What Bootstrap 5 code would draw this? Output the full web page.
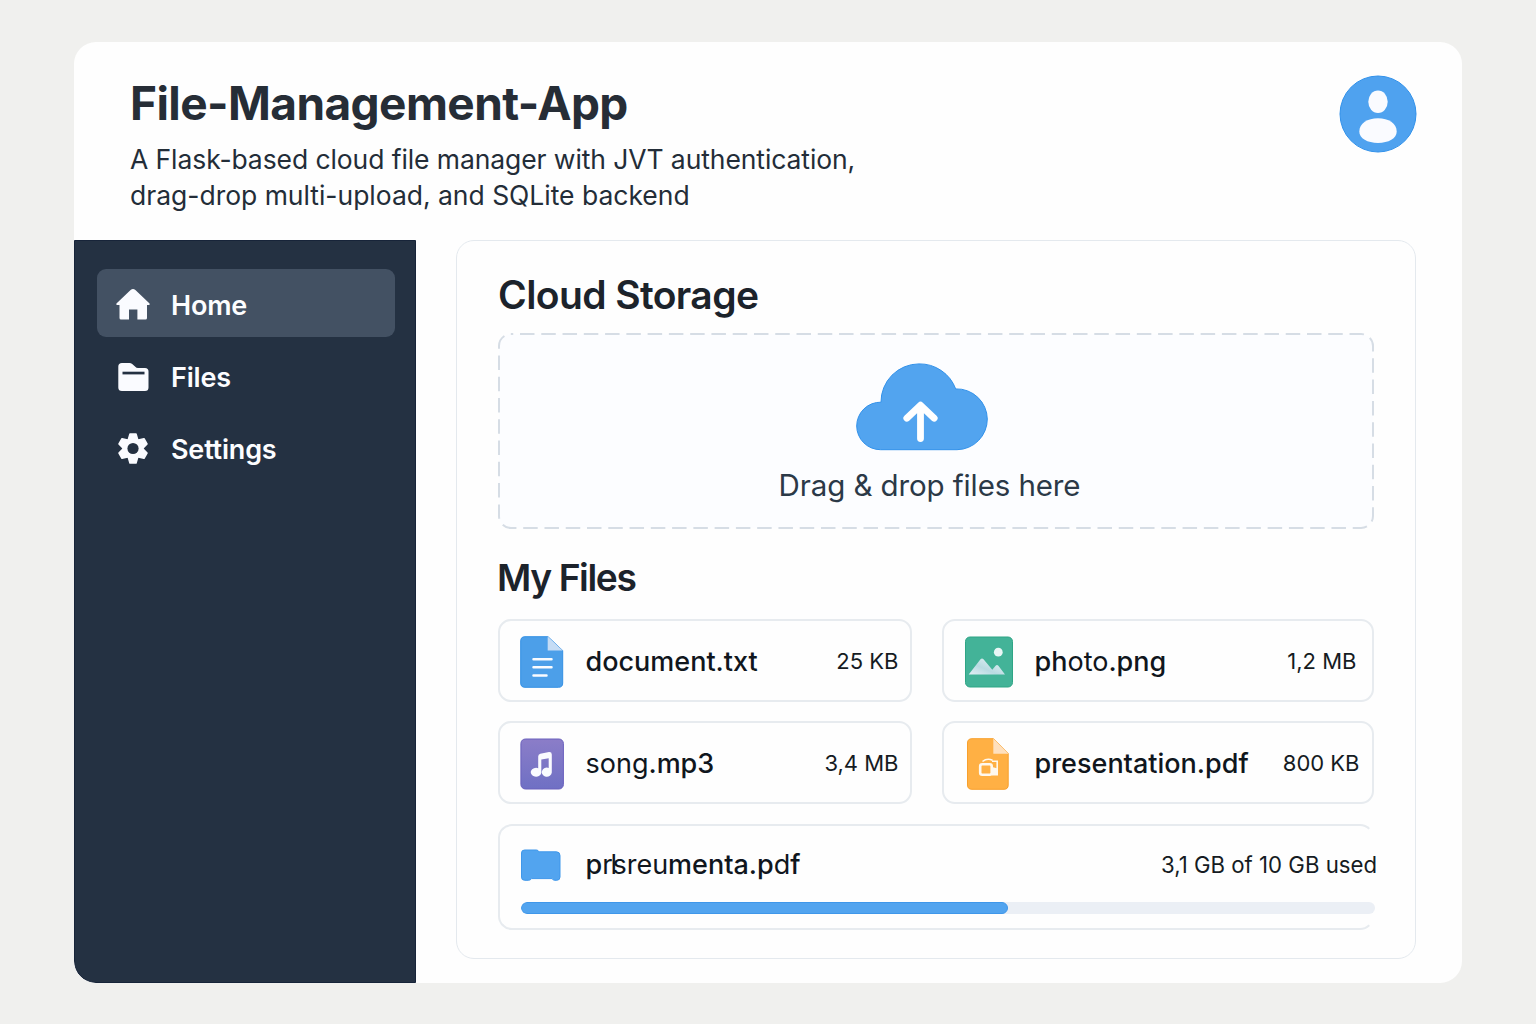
<!DOCTYPE html>
<html lang="en">
<head>
<meta charset="utf-8">
<meta name="viewport" content="width=device-width, initial-scale=1">
<title>File-Management-App</title>
<link rel="stylesheet" href="https://cdn.jsdelivr.net/npm/bootstrap@5.3.0/dist/css/bootstrap.min.css">
<style>
  body { background: #f0f0ee; font-family: Inter, "Liberation Sans", sans-serif; color: #10161d; padding: 42px 74px 41px; height: 1024px; overflow: hidden; }
  svg { flex: none; display: block; }
  .app-shell { height: 941px; border-radius: 22px; background: #fefefe; }
  .app-header { height: 198px; padding: 32px 45px 0 56px; }
  .app-title { font-size: 46px; line-height: 58px; font-weight: 700; color: #262d36; letter-spacing: -.57px; }
  .app-sub { font-size: 26.5px; line-height: 36px; color: #232d38; margin-top: 9px; letter-spacing: -.09px; }
  .app-sub-end { letter-spacing: -.02px; }
  .avatar { margin-top: 1px; }

  .side { width: 342px; background: #243142; padding: 28px 20px 0 22px; border: 1px solid #172439; border-bottom-left-radius: 22px; }
  .side .nav-link { height: 68px; border-radius: 9px; color: #fcfdff; font-size: 27px; font-weight: 600; letter-spacing: -.2px; padding: 0 0 0 19px; gap: 21px; margin-bottom: 4.5px; }
  .side .nav-link.active { background: #435163; }
  .side .nav-link span { margin-top: 6px; }
  .side .nav-link svg { margin-top: 2px; }
  .side .nav-link:last-child { margin-top: -1px; }

  .panel { margin: 0 46px 24px 40px; border: 1px solid #e4e9ee; border-radius: 18px; padding: 31px 41px 0; min-width: 0; }
  .head-storage { font-size: 39px; line-height: 46px; font-weight: 600; color: #1c232b; letter-spacing: -.6px; }
  .head-files { font-size: 37.2px; line-height: 46px; font-weight: 600; color: #1c232b; letter-spacing: -1.4px; margin: 26px 0 18px -1px; }

  .drop { height: 196px; margin: 15px 0 0; padding: 30px 13px 0 0; }
  .drop-frame { position: absolute; inset: 0; }
  .drop-cloud { position: relative; margin-right: 16px; }
  .drop-text { position: relative; font-size: 29.5px; line-height: 38px; color: #2b3947; letter-spacing: -.1px; margin-top: 15px; }

  .file-grid { display: grid; grid-template-columns: 414px 432px; gap: 19px 30px; }
  .file-item { height: 83px; border: 2px solid #e7ebef; border-radius: 13px; padding: 2px 11.5px 0 20px; }
  .file-item.right-a { padding-right: 15.5px; }
  .file-item.right-b { padding-right: 12.5px; }
  .file-name { font-size: 27px; font-weight: 500; margin-left: 21.5px; line-height: 40px; white-space: nowrap; }
  .right-a .file-name, .right-b .file-name { margin-left: 20.5px; }
  .thin { font-weight: 400; }
  .file-size { font-size: 22px; color: #151b22; margin-left: auto; white-space: nowrap; }
  .usage { height: 106px; margin-top: 20px; border: 2px solid #e7ebef; border-right-color: transparent; border-radius: 14px; padding: 19px 0 0 20px; }
  .usage .file-size { margin-right: -5px; font-size: 22.2px; }
  .tight-r { letter-spacing: -2px; }
  .tight-l { letter-spacing: -4.500px; }
  .meter { height: 12.5px; border-radius: 6px; background: #ebeff5; margin: 16.5px -3px 0 1px; }
  .meter .progress-bar { background: #52a4ef; border-radius: 6px; border: 1px solid #3f97ea; }
</style>
</head>
<body>
<div class="app-shell d-flex flex-column overflow-hidden">
  <header class="app-header d-flex justify-content-between align-items-start">
    <div>
      <h1 class="app-title mb-0">File-Management-App</h1>
      <p class="app-sub mb-0">A Flask-based cloud file manager with JVT authentication,<br><span class="app-sub-end">drag-drop multi-upload, and SQLite backend</span></p>
    </div>
    <svg class="avatar" width="78" height="78" viewBox="0 0 78 78">
      <circle cx="39" cy="39" r="38" fill="#4fa2ef" stroke="#3191ea"/>
      <ellipse cx="39" cy="26.8" rx="9.7" ry="11.3" fill="#fafbff"/>
      <path d="M20.300 56.500C20.300 48.500 28.500 43.300 39 43.300S57.700 48.500 57.700 56.500C57.700 63.500 49.500 67.900 39 67.900S20.300 63.500 20.300 56.500Z" fill="#fafbff"/>
    </svg>
  </header>

  <div class="d-flex flex-grow-1">
    <nav class="side nav flex-column flex-nowrap flex-shrink-0">
      <a class="nav-link d-flex align-items-center active" href="#">
        <svg width="34" height="31" viewBox="0 0 34 31" fill="#fafbff"><path d="M14.600.900Q17-.900 19.400.900L33.300 14.200Q34.400 15.800 32.800 15.900H31V29Q31 30.500 29.500 30.500H21.400V20.500H13V30.500H5Q3.500 30.500 3.500 29V15.900H1.200Q-.400 15.800.700 14.200Z"/></svg>
        <span>Home</span>
      </a>
      <a class="nav-link d-flex align-items-center" href="#">
        <svg width="34" height="28" viewBox="-2 0 34 28"><path d="M4 0H11.500Q13 0 14.200 1L17.300 3.700Q18.300 4.900 20 4.900H27Q30.500 4.900 30.500 8.500V24.500Q30.500 28 27 28H4Q.300 28 .300 24.500V3.500Q.300 0 4 0Z" fill="#fafbff"/><rect x="4.500" y="8.700" width="22" height="2.700" fill="#243142"/></svg>
        <span>Files</span>
      </a>
      <a class="nav-link d-flex align-items-center" href="#">
        <svg width="34" height="31" viewBox="-17 -15.500 34 31" fill="#fafbff" stroke="#fafbff" stroke-width="1.600" stroke-linejoin="round">
          <circle r="9.800"/>
          <path id="tooth" d="M-4.600-9L-3-14.400H3L4.600-9Z"/>
          <use href="#tooth" transform="rotate(60)"/><use href="#tooth" transform="rotate(120)"/><use href="#tooth" transform="rotate(180)"/><use href="#tooth" transform="rotate(240)"/><use href="#tooth" transform="rotate(300)"/>
          <circle r="5.600" fill="#243142" stroke="none"/>
        </svg>
        <span>Settings</span>
      </a>
    </nav>

    <main class="panel flex-grow-1">
      <h2 class="head-storage mb-0">Cloud Storage</h2>
      <div class="drop position-relative d-flex flex-column align-items-center">
        <svg class="drop-frame" width="876" height="196" viewBox="0 0 876 196"><rect x="1" y="1" width="874" height="194" rx="12" fill="#fcfdff" stroke="#d6dde5" stroke-width="2" stroke-dasharray="14.500 6.770" stroke-dashoffset="-9"/></svg>
        <svg class="drop-cloud" width="132" height="88" viewBox="0 0 132 88">
          <path d="M24.500 86.700A23.800 23.800 0 0 1 .700 63A23.800 23.800 0 0 1 25 39.200A38 38 0 0 1 63 .900A38.500 38.500 0 0 1 99.700 25.900A30.600 30.600 0 0 1 131.300 56A30.600 30.600 0 0 1 101 86.700Z" fill="#52a4ef" stroke="#3191ea"/>
          <path d="M64.500 75.500V43M50.800 55.200L64.500 42.200L78.200 55.200" fill="none" stroke="#fff" stroke-width="6.800" stroke-linecap="round" stroke-linejoin="round"/>
        </svg>
        <div class="drop-text">Drag &amp; drop files here</div>
      </div>

      <h2 class="head-files">My Files</h2>
      <div class="file-grid">
        <div class="file-item d-flex align-items-center">
          <svg width="44" height="52" viewBox="0 0 44 52">
            <path d="M5 .700H28L42.700 14.500V47Q42.700 51.300 38.500 51.300H5Q.700 51.300.700 47V5Q.700.700 5 .700Z" fill="#4c9fe9" stroke="#3490e4"/>
            <path d="M27.700.500L42.700 14.500H27.700Z" fill="#c5dcf5"/>
            <path d="M13.500 23.200H31.500M13.500 31.200H31.500M13.500 39.500H26.500" stroke="#fafcff" stroke-width="2.500" stroke-linecap="round"/>
          </svg>
          <span class="file-name">document.txt</span><span class="file-size">25 KB</span>
        </div>
        <div class="file-item right-a d-flex align-items-center">
          <svg width="50" height="52" viewBox="0 0 50 52">
            <defs><linearGradient id="peak" x1="0" y1="1" x2="1" y2="0"><stop offset="0" stop-color="#e4eff5"/><stop offset=".4" stop-color="#b9dbe2"/><stop offset="1" stop-color="#eef6f8"/></linearGradient></defs>
            <rect x="1.500" y="1" width="47" height="50" rx="4.500" fill="#43b398" stroke="#2fa585"/>
            <circle cx="34.300" cy="16.200" r="4.400" fill="#e9f6f5"/>
            <path d="M4.700 38.600L16.500 23.300Q18 21.600 19.500 23.300L28.300 33.800L31.600 29.700Q33 28.200 34.400 29.700L41 38.600Z" fill="url(#peak)"/>
          </svg>
          <span class="file-name">ph<span class="thin">oto</span>.png</span><span class="file-size">1,2 MB</span>
        </div>
        <div class="file-item d-flex align-items-center">
          <svg width="44" height="52" viewBox="0 0 44 52">
            <defs><linearGradient id="tune" x1="0" y1="0" x2="0" y2="1"><stop offset="0" stop-color="#8b7dc8"/><stop offset="1" stop-color="#6f70c4"/></linearGradient></defs>
            <rect x=".900" y="1" width="42.500" height="50" rx="4.500" fill="url(#tune)" stroke="#6a60bd"/>
            <path d="M18.200 35V18.500Q18.200 16.300 20.300 15.700L29 14.100Q31.800 13.900 31.800 16.500V34.500A5 4.600 0 1 1 28.700 29.900V20.300L21.300 21.600V35A5.300 4.400 0 1 1 18.200 30.200Z" fill="#fafbff"/>
          </svg>
          <span class="file-name"><span class="thin">song</span>.mp3</span><span class="file-size">3,4 MB</span>
        </div>
        <div class="file-item right-b d-flex align-items-center">
          <svg width="50" height="52" viewBox="0 0 50 52">
            <path d="M8 .700H29.500L44.200 15.500V47Q44.200 51.300 40 51.300H8Q3.500 51.300 3.500 47V5Q3.500.700 8 .700Z" fill="#ffb044" stroke="#f8a02c"/>
            <path d="M29.300.500L44.500 15.800H29.300Z" fill="#ffe0bd"/>
            <rect x="16.200" y="26.200" width="11.500" height="10.500" rx="2" fill="none" stroke="#fff8ee" stroke-width="2.600"/>
            <path d="M18.500 23.500Q23 19.800 28.500 22.200M28 23.200H33.200V34" fill="none" stroke="#fff8ee" stroke-width="1.600"/>
            <path d="M28 29L34 30.500V37.500H28Z" fill="#fff8ee"/>
          </svg>
          <span class="file-name">presentation.pdf</span><span class="file-size">800 KB</span>
        </div>
      </div>

      <div class="usage">
        <div class="d-flex align-items-center">
          <svg width="44" height="32" viewBox="0 0 44 32"><path d="M4.500 1H16.500Q18.300 1 18.700 2.800H36.500Q40 3 40 6.500V28Q40 31.300 36.800 31.300H35Q32.800 31.300 32 29.600H11.500Q10.500 31.300 8.500 31.300H4.500Q1.500 31.300 1.500 28V4Q1.500 1 4.500 1Z" fill="#52a4ef" stroke="#3f97ea"/></svg>
          <span class="file-name">p<span class="thin"><span class="tight-r">r</span><span class="tight-l">l</span>sreu</span>menta.p<span class="thin">d</span>f</span>
          <span class="file-size">3,1 GB of 10 GB used</span>
        </div>
        <div class="progress meter"><div class="progress-bar" style="width:57%"></div></div>
      </div>
    </main>
  </div>
</div>
<script src="https://cdn.jsdelivr.net/npm/bootstrap@5.3.0/dist/js/bootstrap.bundle.min.js"></script>
</body>
</html>
